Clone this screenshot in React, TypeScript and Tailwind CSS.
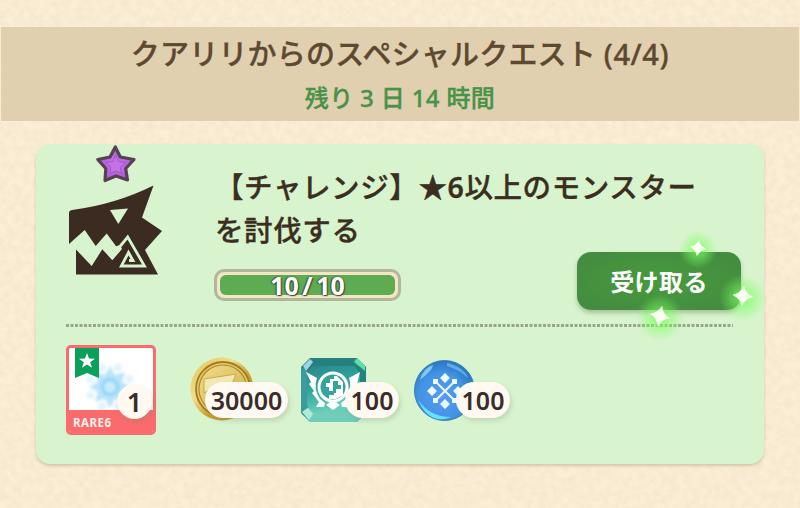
import { FC, ReactNode } from "react";

const Paper: FC = () => (
  <svg className="absolute inset-0 h-full w-full" aria-hidden="true">
    <filter id="paper" x="0" y="0" width="100%" height="100%">
      <feTurbulence type="fractalNoise" baseFrequency="0.13" numOctaves="4" seed="7" />
      <feColorMatrix values="0 0 0 0 0.78  0 0 0 0 0.62  0 0 0 0 0.45  0.5 0 0 0 -0.17" />
    </filter>
    <rect width="100%" height="100%" filter="url(#paper)" />
  </svg>
);

const QuestHeader: FC = () => (
  <header className="relative mx-px flex h-[94px] flex-col items-center bg-[#e1d0af]">
    <h1 className="mt-[6px] text-[29px] leading-[42px] font-medium tracking-[0.2px] whitespace-nowrap text-[#5d4931] [-webkit-text-stroke:0.35px_#5d4931]">
      クアリリからのスペシャルクエスト <span className="tracking-[0.6px]">(4/4)</span>
    </h1>
    <p className="mt-[5px] text-[24px] leading-[36px] font-medium tracking-[0.35px] whitespace-nowrap text-[#48924a] [-webkit-text-stroke:0.35px_#48924a]">
      残り 3 日 14 時間
    </p>
  </header>
);

const QuestIcon: FC = () => (
  <svg className="h-[136px] w-[100px] shrink-0" viewBox="66 144 100 136">
    <defs>
      <radialGradient id="star">
        <stop offset="0" stopColor="#c77ae6" />
        <stop offset="1" stopColor="#ab58d6" />
      </radialGradient>
    </defs>
    <path
      d="M115.3 147 L120.3 157 L134 159.500 L125.7 168.5 L127.500 180 L116 176 L105 180.500 L105.8 168.5 L97.8 159.500 L110 157Z"
      fill="url(#star)"
      stroke="#574052"
      strokeWidth="3.2"
      strokeLinejoin="round"
    />
    <path
      d="M115.5 155 L118.5 161.5 L125.5 162.5 L120.3 167.3 L121.5 173.5 L115.8 171 L110 173.5 L111 167.3 L106 162.5 L113 161.5Z"
      fill="#c273e4"
      stroke="#a651cf"
      strokeWidth="1"
    />
    <path
      d="M69 244 V213 Q69 210.500 72 210 Q115 204.500 153.500 185.500 L142 217.500 L162 231 L145 250 L158 274.500 H76 V249.500 L91.700 266 L102.300 249.300 L112.300 260 L120 251 L117 247.500 L106.700 233.500 L95.700 246 L84.700 230Z"
      fill="#3b2b21"
    />
    <path d="M110 210 L128 208.500 L118.300 224Z" fill="#d8f4ce" />
    <path d="M115.500 246.500 L120 245 L122 249 L112.300 260 L108 255Z" fill="#d8f4ce" />
    <path
      d="M117.500 249.500 L127.700 237 L144.500 266 H121.300 L128.500 252.500 L133 260.500 H129"
      fill="none"
      stroke="#d8f4ce"
      strokeWidth="2.800"
    />
  </svg>
);

const Sparkle: FC<{ className: string; tilt?: string }> = ({ className, tilt }) => (
  <span className={`absolute flex size-12 items-center justify-center ${className}`}>
    <span className="absolute inset-0 translate-y-[2px] rounded-full bg-[radial-gradient(circle,#6dff45cc_0%,#7dff6380_30%,#8dff7800_70%)]" />
    <svg className="relative size-6" viewBox="-12 -12 24 24">
      <path
        d="M0 -10.500 Q1.500 -3 10.500 0 Q3 2 0 10.500 Q-2.500 2.500 -10.500 0 Q-3 -2.500 0 -10.500Z"
        fill="#f6fff0"
        transform={tilt}
      />
    </svg>
  </span>
);

const ClaimButton: FC = () => (
  <div className="relative h-[58px] w-[164px]">
    <button className="h-full w-full rounded-[14px] bg-[radial-gradient(ellipse_at_center,#46983d_20%,#448d40_80%)] pt-[2px] text-[24px] font-bold tracking-[0.4px] text-white shadow-[0_3px_4px_#5a7a5066]">
      受け取る
    </button>
    <Sparkle className="-top-[28px] left-[97px] scale-80" tilt="rotate(8)" />
    <Sparkle className="top-[20px] left-[142px]" tilt="rotate(6)" />
    <Sparkle className="top-[40px] left-[59px]" tilt="rotate(12)" />
  </div>
);

const ProgressBar: FC = () => (
  <div className="-ml-px h-[32px] w-[187px] rounded-[10px] border-[3px] border-[#b0b79b] bg-[#f4e5c4] p-[3px]">
    <div className="flex h-full items-center justify-center rounded-[6px] bg-[#5eac51] text-[25px] leading-none font-bold text-white [word-spacing:-3px] [text-shadow:0_0_2px_#3c4b35,1px_1px_1px_#3c4b35,-1px_0_1px_#3c4b35]">
      10 / 10
    </div>
  </div>
);

const Reward: FC<{ className: string; count: string; badge: string; children: ReactNode }> = ({
  className,
  count,
  badge,
  children,
}) => (
  <div className={`relative shrink-0 ${className}`}>
    {children}
    <span
      className={`absolute flex items-center justify-center rounded-full bg-[#fff9f2] pt-[2px] font-semibold text-[#3a2c28] shadow-[2px_3px_4px_#7c8b6d40] ${badge}`}
    >
      {count}
    </span>
  </div>
);

const RareItem: FC = () => (
  <div className="relative flex h-[90px] w-[90px] flex-col overflow-hidden rounded-[5px] border-[3px] border-[#fa6b6d] bg-white">
    <svg className="h-[62px] w-full" viewBox="69 348 84 62">
      <filter id="soft">
        <feGaussianBlur stdDeviation="1.4" />
      </filter>
      <g filter="url(#soft)">
        {[0, 45, 90, 135, 180, 225, 270, 315].map((angle) => (
          <path
            key={angle}
            d="M110 387 L104 377 L110 366 L116 377Z"
            fill="#b9e3fa"
            transform={`rotate(${angle} 110 387)`}
          />
        ))}
        {[22, 67, 112, 157, 202, 247, 292, 337].map((angle) => (
          <circle key={angle} cx="110" cy="366" r="4" fill="#e0f3fd" transform={`rotate(${angle} 110 387)`} />
        ))}
        <circle cx="110" cy="387" r="9" fill="#8bd3f8" />
        <circle cx="110" cy="387" r="6" fill="#c6ecfd" />
      </g>
    </svg>
    <div className="-mx-[3px] flex flex-1 items-center bg-[#fa6b6d] pt-[3px] pl-[7px] text-[11.500px] leading-none font-bold tracking-[0.5px] text-[#fff1ea]">
      RARE6
    </div>
    <svg className="absolute -top-[2px] left-[6px] h-[32px] w-[24px]" viewBox="0 0 24 32">
      <path d="M0 0H24V32L12 27L0 32Z" fill="#0ba05a" />
      <path d="M12 7 L14 12.500 L20 12.700 L15.200 16.200 L17 21.800 L12 18.500 L7 21.800 L8.800 16.200 L4 12.700 L10 12.500Z" fill="#fff" />
    </svg>
  </div>
);

const Coin: FC = () => (
  <svg className="size-16" viewBox="0 0 64 64">
    <defs>
      <linearGradient id="coin" x1="0" y1="0" x2="1" y2="1">
        <stop offset="0" stopColor="#e2c24e" />
        <stop offset=".35" stopColor="#f1df8c" />
        <stop offset=".6" stopColor="#c99e30" />
        <stop offset="1" stopColor="#b58723" />
      </linearGradient>
      <linearGradient id="coin-face" x1="0" y1="0" x2="1" y2="1">
        <stop offset="0" stopColor="#f0dd8a" />
        <stop offset="1" stopColor="#cfae48" />
      </linearGradient>
    </defs>
    <circle cx="32" cy="32" r="31.500" fill="url(#coin)" />
    <circle cx="33" cy="32" r="27" fill="#e3cb6a" stroke="#a47b20" strokeWidth="1.800" />
    <circle cx="33" cy="32" r="24" fill="url(#coin-face)" stroke="#b08a2c" strokeWidth="1.200" />
    <path d="M14 22 L46 17 L42 27 L33 26 L14 36Z" fill="#f3e7b2" stroke="#c7a94f" strokeWidth="1" />
  </svg>
);

const Gem: FC = () => (
  <svg className="size-[65px]" viewBox="301 358 65 65">
    <defs>
      <linearGradient id="gem" x1="0" y1="0" x2=".3" y2="1">
        <stop offset="0" stopColor="#2a8790" />
        <stop offset=".5" stopColor="#2fa59b" />
        <stop offset="1" stopColor="#67cfba" />
      </linearGradient>
    </defs>
    <path d="M310 358 H357 L366 367 V413 L357 422 H310 L301 413 V367Z" fill="#25817f" />
    <path d="M302 412 L310 404 H357 L365 413 L357 422 H310Z" fill="#70cdb8" />
    <path d="M301 367 L310 373 V406 L301 413Z" fill="#3e9b9d" />
    <path d="M313 366 H354 L360 373 V405 L353 412 H313 L307 405 V373Z" fill="url(#gem)" />
    <path d="M303 366 L310 359 L313 362 L306 371Z" fill="#9ed3e6" />
    <path d="M354 362 L357 358 L365 366 V371Z" fill="#58e3a4" />
    <path d="M302 412 L308 408 L313 414 L309 420Z" fill="#b1ead9" />
    <path d="M306 372 L317 378 Q313 389 320 399 L325 403 L324 407 H316 L319 402 L312 393 L314 391 L309 384 L311 382Z" fill="#fff" />
    <path d="M360 372 L349 378 Q353 389 346 399 L341 403 L342 407 H350 L347 402 L354 393 L357 384Z" fill="#fff" />
    <circle cx="333" cy="387" r="14" fill="#35a59b" stroke="#fff" strokeWidth="3" />
    <path
      d="M334 376 H337 L343 382 V395 L336 399 H329 V395 H334 V391 H329 V387 H326 V383 H330 V379 H334Z"
      fill="#fff"
    />
    <path d="M333 381 H338 V385 H341 V389 H336 V393 H333Z" fill="#35a59b" />
    <path d="M330 402 H336 L340 405 L333 410 L326 405Z" fill="#fff" />
  </svg>
);

const Orb: FC = () => (
  <svg className="size-[62px]" viewBox="414 360 62 62">
    <defs>
      <radialGradient id="orb" cx=".45" cy=".6" r=".6">
        <stop offset="0" stopColor="#5a9af5" />
        <stop offset=".65" stopColor="#4093e5" />
        <stop offset="1" stopColor="#2877bd" />
      </radialGradient>
    </defs>
    <circle cx="444.500" cy="390.500" r="30" fill="url(#orb)" stroke="#3c82b5" />
    <path d="M418 400 Q430 417 451 417 Q430 426 418 400Z" fill="#6eeefe" opacity=".85" />
    <path d="M420 380 Q423 368 433 365 Q433 370 420 380Z" fill="#9bd4f7" opacity=".8" />
    <path d="M447 363 Q464 367 468 378 Q458 369 447 366Z" fill="#79bef2" opacity=".7" />
    <path d="M435 381 L455 401 M455 381 L435 401" stroke="#e9fbff" strokeWidth="2" />
    <g fill="#e9fbff">
      <path d="M445 373 L450 378 L445 383 L440 378Z M445 399 L450 404 L445 409 L440 404Z" />
      <path d="M432 386 L437 391 L432 396 L427 391Z M458 386 L463 391 L458 396 L453 391Z" />
      <path d="M433 379 H438 V384 H433Z M452 379 H457 V384 H452Z M433 398 H438 V403 H433Z M452 398 H457 V403 H452Z" />
    </g>
  </svg>
);

const QuestCard: FC = () => (
  <section className="relative mx-[36px] mt-[23px] h-[320px] rounded-[14px] bg-[#d8f4ce] pl-[30px] shadow-[0_2px_3px_#a9a78380]">
    <div className="flex h-[180px]">
      <QuestIcon />
      <div className="ml-[49px] flex-1 pt-[22px]">
        <h2 className="text-[28.500px] leading-[43px] font-medium tracking-[0.6px] whitespace-nowrap text-[#3b2e20] [-webkit-text-stroke:0.35px_#3b2e20]">
          【チャレンジ】★<span className="font-semibold">6</span>以上のモンスター
          <br />
          を討伐する
        </h2>
        <div className="flex justify-between pr-[23px]">
          <div className="pt-[17px]">
            <ProgressBar />
          </div>
          <ClaimButton />
        </div>
      </div>
    </div>
    <svg className="block h-[3px] w-[667px]" viewBox="0 0 667 3">
      <path d="M0 1.500H667" stroke="#98a48e" strokeWidth="3" strokeDasharray="3 1.500" />
    </svg>
    <div className="flex items-start pt-[18px]">
      <Reward className="" count="1" badge="top-[39px] left-[51px] size-[35px] text-[27px]">
        <RareItem />
      </Reward>
      <Reward className="mt-[12px] ml-[34px]" count="30000" badge="top-[25px] left-[15px] h-[36px] w-[83px] text-[25px]">
        <Coin />
      </Reward>
      <Reward className="mt-[13px] ml-[47px]" count="100" badge="top-[24px] left-[44px] h-[36px] w-[54px] text-[25px]">
        <Gem />
      </Reward>
      <Reward className="mt-[15px] ml-[48px]" count="100" badge="top-[22px] left-[42px] h-[36px] w-[54px] text-[25px]">
        <Orb />
      </Reward>
    </div>
  </section>
);

const App: FC = () => (
  <main className="relative h-[508px] w-[800px] overflow-hidden bg-[#fbeed6] pt-[27px] font-['Noto_Sans','Noto_Sans_CJK_JP',sans-serif]">
    <Paper />
    <QuestHeader />
    <QuestCard />
  </main>
);

export default App;
